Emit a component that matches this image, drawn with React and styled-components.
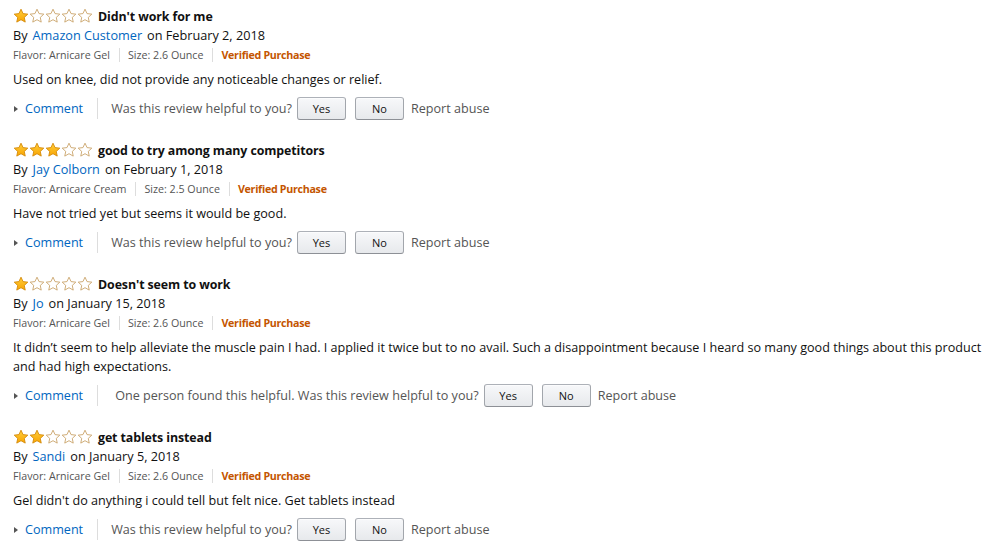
import styled, { createGlobalStyle } from "styled-components";

const GlobalStyle = createGlobalStyle`
  body {
    margin: 0;
    background: #fff;
    font-family: "Open Sans", "Noto Sans", sans-serif;
    color: #111;
  }
`;

const reviews = [
  {
    rating: 1,
    title: "Didn't work for me",
    author: "Amazon Customer",
    date: "February 2, 2018",
    flavor: "Arnicare Gel",
    size: "2.6 Ounce",
    body: "Used on knee, did not provide any noticeable changes or relief.",
  },
  {
    rating: 3,
    title: "good to try among many competitors",
    author: "Jay Colborn",
    date: "February 1, 2018",
    flavor: "Arnicare Cream",
    size: "2.5 Ounce",
    body: "Have not tried yet but seems it would be good.",
  },
  {
    rating: 1,
    title: "Doesn't seem to work",
    author: "Jo",
    date: "January 15, 2018",
    flavor: "Arnicare Gel",
    size: "2.6 Ounce",
    body: "It didn’t seem to help alleviate the muscle pain I had. I applied it twice but to no avail. Such a disappointment because I heard so many good things about this product and had high expectations.",
    helpful: "One person found this helpful.",
  },
  {
    rating: 2,
    title: "get tablets instead",
    author: "Sandi",
    date: "January 5, 2018",
    flavor: "Arnicare Gel",
    size: "2.6 Ounce",
    body: "Gel didn't do anything i could tell but felt nice. Get tablets instead",
  },
];

const Page = styled.div`
  width: 982px;
  padding: 6px 0 0 13px;
`;

const Review = styled.div`
  margin-bottom: 20px;
`;

const TitleRow = styled.div`
  display: flex;
  align-items: center;
  height: 20px;
`;

const StarRow = styled.div`
  display: flex;
  margin-right: 5px;
`;

const Title = styled.span`
  font-size: 12.4px;
  font-weight: 700;
  letter-spacing: -0.1px;
  color: #111;
`;

const Byline = styled.div`
  font-size: 12.7px;
  color: #111;
  height: 19px;
  line-height: 19px;
`;

const Link = styled.a`
  color: #0066c0;
  text-decoration: none;
  margin: 0 5px;
`;

const Meta = styled.div`
  display: flex;
  align-items: center;
  font-size: 10.7px;
  color: #555;
  height: 20px;
`;

const MetaItem = styled.span`
  padding: 0 9px 0 8px;
  border-left: 1px solid #ddd;
  line-height: 14px;
  &:first-child {
    padding-left: 0;
    border-left: none;
  }
`;

const Verified = styled(MetaItem)`
  color: #c45500;
  font-weight: 700;
  letter-spacing: -0.3px;
`;

const Body = styled.p`
  margin: 5px 0 0;
  font-size: 12.6px;
  line-height: 19px;
  color: #111;
`;

const Actions = styled.div`
  display: flex;
  align-items: center;
  margin-top: 7px;
  height: 24px;
  font-size: 12.6px;
  color: #555;
`;

const CommentLink = styled.a`
  display: flex;
  align-items: center;
  color: #0066c0;
  text-decoration: none;
  padding: 1px 14px 0 0;
  border-right: 1px solid #ddd;
  line-height: 20px;
  &::before {
    content: "";
    margin: 0 7px 0 1px;
    border-style: solid;
    border-width: 3.5px 0 3.5px 4px;
    border-color: transparent transparent transparent #555;
  }
`;

const Helpful = styled.span`
  margin-left: ${(p) => (p.$wide ? 17 : 13)}px;
`;

const VoteButton = styled.button`
  width: 49px;
  height: 23px;
  margin-left: ${(p) => p.$gap}px;
  padding: 0;
  border: 1px solid #adb1b8;
  border-color: #adb1b8 #a2a6ac #8d9096;
  border-radius: 3px;
  background: linear-gradient(to bottom, #f7f8fa, #e7e9ec);
  font-family: inherit;
  font-size: 11px;
  color: #111;
  box-shadow: inset 0 1px 0 rgba(255, 255, 255, 0.6);
`;

const Report = styled.span`
  margin-left: 7px;
`;

const Star = ({ filled }) => (
  <svg width="16" height="16" viewBox="0 0 16 16">
    <defs>
      <linearGradient id="starFill" x1="0" y1="0" x2="0" y2="1">
        <stop offset="0" stopColor="#ffce3d" />
        <stop offset="1" stopColor="#f8a400" />
      </linearGradient>
    </defs>
    <path
      d="M8 1.2l2.05 4.4 4.75.55-3.52 3.25.95 4.7L8 11.7l-4.23 2.4.95-4.7L1.2 6.15l4.75-.55z"
      fill={filled ? "url(#starFill)" : "#fff"}
      stroke={filled ? "#d48a0a" : "#c9a46a"}
      strokeWidth="0.9"
      strokeLinejoin="round"
    />
  </svg>
);

const Stars = ({ rating }) => (
  <StarRow>
    {[1, 2, 3, 4, 5].map((n) => (
      <Star key={n} filled={n <= rating} />
    ))}
  </StarRow>
);

export default function App() {
  return (
    <>
      <GlobalStyle />
      <Page>
        {reviews.map((r) => (
          <Review key={r.title}>
            <TitleRow>
              <Stars rating={r.rating} />
              <Title>{r.title}</Title>
            </TitleRow>
            <Byline>
              By<Link href="#">{r.author}</Link>on {r.date}
            </Byline>
            <Meta>
              <MetaItem>Flavor: {r.flavor}</MetaItem>
              <MetaItem>Size: {r.size}</MetaItem>
              <Verified>Verified Purchase</Verified>
            </Meta>
            <Body>{r.body}</Body>
            <Actions>
              <CommentLink href="#">Comment</CommentLink>
              <Helpful $wide={!!r.helpful}>
                {r.helpful ? `${r.helpful} ` : ""}Was this review helpful to you?
              </Helpful>
              <VoteButton $gap={5}>Yes</VoteButton>
              <VoteButton $gap={9}>No</VoteButton>
              <Report>Report abuse</Report>
            </Actions>
          </Review>
        ))}
      </Page>
    </>
  );
}
